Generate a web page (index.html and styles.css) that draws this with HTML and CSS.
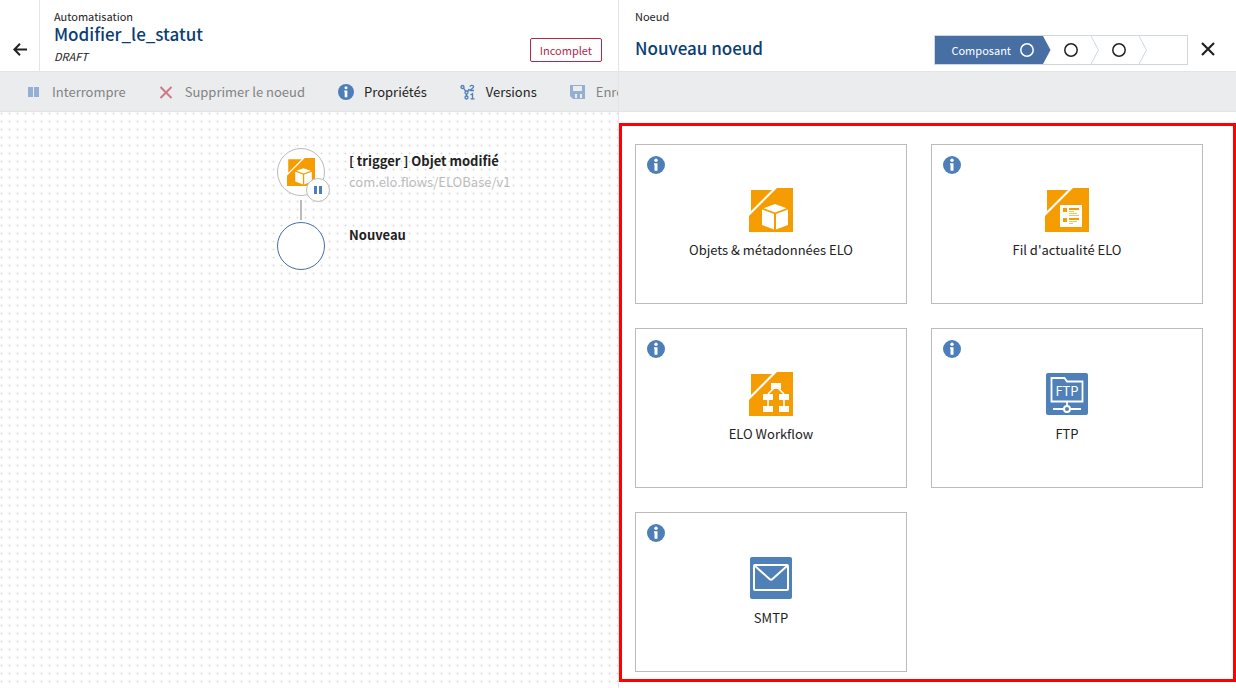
FILE: index.html
```html
<!DOCTYPE html>
<html lang="fr">
<head>
<meta charset="utf-8">
<meta name="viewport" content="width=device-width, initial-scale=1">
<title>Modifier_le_statut</title>
<link rel="stylesheet" href="styles.css">
</head>
<body>
<svg class="defs" aria-hidden="true">
  <symbol id="info" viewBox="0 0 18 18">
    <circle cx="9" cy="9" r="9" fill="#4d7eb9"/>
    <circle cx="9" cy="4.3" r="1.7" fill="#fff"/>
    <path d="M7 7.2h3.500v7.600h-3v-6H7z" fill="#fff"/>
  </symbol>
  <symbol id="ring" viewBox="0 0 14 14">
    <circle cx="7" cy="7" r="6.200" fill="none" stroke="currentColor" stroke-width="1.500"/>
  </symbol>
  <symbol id="tile" viewBox="0 0 44 44">
    <path d="M2 2h21L2 23z" fill="#f59c00"/>
    <path d="M28 0h16v44H0V28z" fill="#f59c00"/>
  </symbol>
  <symbol id="cube" viewBox="0 0 44 44">
    <use href="#tile"/>
    <path d="M26 16l11.500 4.200L26 24.500l-11.500-4.300z" fill="#fff"/>
    <path d="M13 21.500l12 4.500v15.500L13 37z" fill="#fff"/>
    <path d="M39 21.500L27 26v15.500L39 37z" fill="#fff"/>
  </symbol>
</svg>
<div class="app">
  <main class="pane">
    <header class="header">
      <button class="back" type="button" aria-label="Retour">
        <svg width="14" height="13" viewBox="0 0 14 13" fill="none" stroke="#222" stroke-width="2"><path d="M14 6.500H1.500M7 .8L1.400 6.500 7 12.200"/></svg>
      </button>
      <div class="heading">
        <span class="kicker">Automatisation</span>
        <h1 class="title">Modifier_le_statut</h1>
        <em class="draft">DRAFT</em>
      </div>
      <button class="status" type="button">Incomplet</button>
    </header>
    <nav class="toolbar" aria-label="Actions">
      <button class="tool" type="button" disabled>
        <svg width="16" height="16" viewBox="0 0 16 16" fill="#93afd3"><path d="M2 3h5v10H2zM8 3h5v10H8z"/></svg>Interrompre</button>
      <button class="tool" type="button" disabled>
        <svg width="16" height="16" viewBox="0 0 16 16" stroke="#cc7a88" stroke-width="2"><path d="M1.500 3l11 11M12.500 3l-11 11"/></svg>Supprimer le noeud</button>
      <button class="tool" type="button">
        <svg width="16" height="16"><use href="#info"/></svg>Propriétés</button>
      <button class="tool" type="button">
        <svg width="16" height="16" viewBox="0 0 16 16" fill="none" stroke="#4d7eb9" stroke-width="1.300"><circle cx="2.500" cy="3" r="1.500"/><circle cx="6.500" cy="8.500" r="1.500"/><circle cx="6.500" cy="13.500" r="1.500"/><path d="M3.500 4.200l2.200 3M6.500 10v2M7.500 7.300l2-2.300M10 2.800C10.200.9 13.600.9 13.600 2.800c0 1.500-2.800 2.200-3.400 3.700H14M10.500 11l2-1.300V15M10.500 14.800h4"/></svg>Versions</button>
      <button class="tool" type="button" disabled>
        <svg width="16" height="16" viewBox="0 0 16 16"><path d="M0 1h15v14H3l-3-3z" fill="#93afd3"/><path d="M3 2h9v5H3zM5 10h7v4H5z" fill="#ebeced"/><path d="M7 10h3v4H7z" fill="#93afd3"/></svg>Enregistrer</button>
    </nav>
    <section class="canvas">
      <ol class="flow">
        <li class="node">
          <span class="bubble">
            <svg width="28" height="28"><use href="#cube"/></svg>
            <span class="badge"><svg width="8" height="8" viewBox="0 0 8 8" fill="#4d7eb9"><path d="M0 0h3v8H0zM5 0h3v8H5z"/></svg></span>
          </span>
          <span class="label"><strong>[ trigger ] Objet modifié</strong><span class="path">com.elo.flows/ELOBase/v1</span></span>
        </li>
        <li class="node next">
          <span class="bubble active"></span>
          <span class="label"><strong>Nouveau</strong></span>
        </li>
      </ol>
    </section>
  </main>
  <aside class="pane side">
    <header class="header">
      <div class="heading">
        <span class="kicker">Noeud</span>
        <h2 class="title low">Nouveau noeud</h2>
      </div>
      <ol class="steps">
        <li class="step current">Composant<svg width="14" height="14"><use href="#ring"/></svg></li>
        <li class="arrow"><svg width="8" height="28" viewBox="0 0 8 28"><path d="M0 0l7.500 14L0 28z" fill="#476fa4"/></svg></li>
        <li class="step"><svg width="14" height="14"><use href="#ring"/></svg></li>
        <li class="arrow"><svg width="8" height="28" viewBox="0 0 8 28" fill="none" stroke="#cdd6e1"><path d="M0 0l7.500 14L0 28"/></svg></li>
        <li class="step"><svg width="14" height="14"><use href="#ring"/></svg></li>
        <li class="arrow"><svg width="8" height="28" viewBox="0 0 8 28" fill="none" stroke="#cdd6e1"><path d="M0 0l7.500 14L0 28"/></svg></li>
        <li class="step"></li>
      </ol>
      <button class="close" type="button" aria-label="Fermer">
        <svg width="14" height="14" viewBox="0 0 14 14" stroke="#222" stroke-width="2.200"><path d="M1 1l12 12M13 1L1 13"/></svg>
      </button>
    </header>
    <div class="toolbar"></div>
    <section class="picker">
      <article class="card">
        <button class="hint" type="button" aria-label="Informations"><svg width="18" height="18"><use href="#info"/></svg></button>
        <svg width="44" height="44"><use href="#cube"/></svg>
        <h3 class="name">Objets &amp; métadonnées ELO</h3>
      </article>
      <article class="card">
        <button class="hint" type="button" aria-label="Informations"><svg width="18" height="18"><use href="#info"/></svg></button>
        <svg width="44" height="44" viewBox="0 0 44 44"><use href="#tile"/><path d="M15 17h22v22H15z" fill="#fff"/><path d="M18 20h4v4h-4zM24 20h10v2H24zM18 30h4v4h-4zM24 30h10v2H24z" fill="#f59c00"/><path d="M24 23h5v1h-5zM24 25h8v1h-8zM24 27h10v1H24zM24 33h8v1h-8zM24 35h4v1h-4z" fill="#f9c066"/></svg>
        <h3 class="name">Fil d'actualité ELO</h3>
      </article>
      <article class="card">
        <button class="hint" type="button" aria-label="Informations"><svg width="18" height="18"><use href="#info"/></svg></button>
        <svg width="44" height="44" viewBox="0 0 44 44"><use href="#tile"/><path d="M22 11h10v6H22zM14 22h10v6H14zM30 22h10v6H30zM14 34h10v6H14zM30 34h10v6H30z" fill="#fff"/><path d="M25 16l-6 6M29 16l6 6M19 27v8M35 27v8" stroke="#fff" stroke-width="1.600"/></svg>
        <h3 class="name">ELO Workflow</h3>
      </article>
      <article class="card">
        <button class="hint" type="button" aria-label="Informations"><svg width="18" height="18"><use href="#info"/></svg></button>
        <svg width="44" height="44" viewBox="0 0 44 44"><rect x="1" y="1" width="42" height="42" rx="2" fill="#5080b8"/><path d="M6.500 29.500V6h13l2.500 3.500h15.500v20zM22 29.500V35M8 37h28" fill="none" stroke="#fff" stroke-width="1.800"/><circle cx="22" cy="37" r="3" fill="#5080b8" stroke="#fff" stroke-width="2"/><text x="22" y="24" class="ftp" text-anchor="middle">FTP</text></svg>
        <h3 class="name">FTP</h3>
      </article>
      <article class="card">
        <button class="hint" type="button" aria-label="Informations"><svg width="18" height="18"><use href="#info"/></svg></button>
        <svg width="44" height="44" viewBox="0 0 44 44"><rect x="1" y="1" width="42" height="42" rx="2" fill="#5080b8"/><path d="M6 9h32a1 1 0 0 1 1 1v23a1 1 0 0 1-1 1H6a1 1 0 0 1-1-1V10a1 1 0 0 1 1-1zM6 10l14.500 13q1.500 1.200 3 0L38 10" fill="none" stroke="#fff" stroke-width="2"/></svg>
        <h3 class="name">SMTP</h3>
      </article>
    </section>
  </aside>
</div>
</body>
</html>
```
FILE: styles.css
```css
* { box-sizing: border-box; }
body {
  margin: 0;
  background: #fff;
  color: #222;
  font: 13px/20px "Noto Sans CJK SC", "Noto Sans", sans-serif;
}
button { padding: 0; border: 0; background: none; color: inherit; font: inherit; }
h1, h2, h3, ol { margin: 0; padding: 0; }
ol { list-style: none; }
svg { display: block; flex: none; }
.defs { position: absolute; width: 0; height: 0; }

.app { display: grid; grid-template-columns: 1fr 1fr; min-height: 100vh; }
.pane { display: flex; flex-direction: column; min-width: 0; }
.side { border-left: 1px solid #e3e4e5; }

.header { display: flex; height: 71px; }
.back {
  display: flex;
  justify-content: center;
  width: 40px;
  padding-top: 43px;
  border-right: 1px solid #e3e4e5;
}
.heading { display: flex; flex: 1; flex-direction: column; padding: 8px 0 0 14px; }
.side .heading { padding-left: 16px; }
.kicker, .draft { font-size: 11px; line-height: 16px; }
.title { margin-bottom: 4px; color: #0b3e73; font-size: 17px; font-weight: 500; line-height: 20px; }
.low { margin-top: 14px; }
.status {
  align-self: flex-start;
  height: 24px;
  margin: 38px 16px 0 0;
  padding: 0 9px;
  border: 1px solid #b0284c;
  border-radius: 2px;
  color: #b0284c;
  font-size: 11px;
  line-height: 20px;
}

.toolbar {
  display: flex;
  gap: 33px;
  height: 41px;
  padding-left: 26px;
  overflow: hidden;
  border-top: 1px solid #e3e4e5;
  border-bottom: 1px solid #e3e4e5;
  background: #ebeced;
}
.tool { display: flex; flex: none; align-items: center; gap: 10px; white-space: nowrap; }
.tool:disabled { color: #828384; }

.canvas {
  flex: 1;
  padding: 36px 0 0 277px;
  background: url("data:image/svg+xml,%3Csvg xmlns='http://www.w3.org/2000/svg' width='8' height='8'%3E%3Cpath d='M0 1h3v1H0zM1 0h1v3H1z' fill='%23ececec'/%3E%3Cpath d='M1 1h1v1H1z' fill='%23dedede'/%3E%3C/svg%3E");
}
.node { display: flex; gap: 24px; }
.next::before {
  position: absolute;
  width: 2px;
  height: 20px;
  margin: -22px 0 0 23px;
  background: #bbb;
  content: "";
}
.next { margin-top: 26px; }
.bubble {
  position: relative;
  display: flex;
  align-items: center;
  justify-content: center;
  width: 48px;
  height: 48px;
  border: 1px solid #bbb;
  border-radius: 50%;
  background: #fff;
}
.active { border-color: #476fa4; }
.badge {
  position: absolute;
  right: -6px;
  bottom: -7px;
  display: flex;
  align-items: center;
  justify-content: center;
  width: 24px;
  height: 24px;
  border: 1px solid #bbb;
  border-radius: 50%;
  background: #fff;
}
.label { display: flex; flex-direction: column; gap: 1px; padding-top: 3px; }
.path { color: #bbb; }

.steps {
  display: flex;
  height: 30px;
  margin-top: 35px;
  border: 1px solid #cdd6e1;
  font-size: 11px;
}
.step { display: flex; align-items: center; justify-content: center; gap: 9px; width: 40px; }
.current { width: auto; padding: 0 9px 0 16px; background: #476fa4; color: #fff; }
.close { display: flex; width: 14px; margin: 42px 21px 0 13px; }

.picker {
  display: grid;
  grid-template-columns: 1fr 1fr;
  grid-auto-rows: 160px;
  gap: 24px;
  margin-top: 11px;
  padding: 18px 30px 7px 13px;
  border: 3px solid #f00;
}
.card {
  position: relative;
  display: flex;
  flex-direction: column;
  align-items: center;
  gap: 8px;
  padding-top: 43px;
  border: 1px solid #bbb;
}
.hint { position: absolute; top: 11px; left: 11px; }
.name { font-size: 13px; font-weight: 400; line-height: 20px; }
.ftp { fill: #fff; font-size: 13px; }
```
